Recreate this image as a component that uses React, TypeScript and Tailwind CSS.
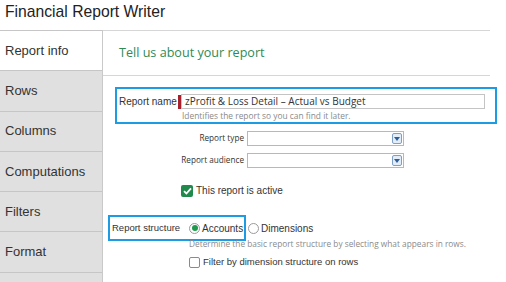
import React from "react";

const TABS = ["Report info", "Rows", "Columns", "Computations", "Filters", "Format", ""];

function SelectBox() {
  return (
    <div className="flex h-[15px] w-[157px] items-center justify-end border border-[#b8b8b8] bg-white pr-[1px]">
      <span className="flex h-[11px] w-[10px] items-center justify-center rounded-[2px] border border-[#7f9fc4] bg-[#e3edf8]">
        <svg width="6" height="4" viewBox="0 0 6 4">
          <path d="M0 0H6L3 4Z" fill="#2d5d9a" />
        </svg>
      </span>
    </div>
  );
}

function CheckedBox() {
  return (
    <span className="flex h-[12px] w-[12px] shrink-0 items-center justify-center rounded-[2px] bg-[#1f8a4c]">
      <svg width="9" height="8" viewBox="0 0 9 8">
        <path d="M1 4.2L3.4 6.5L8 1.3" stroke="white" strokeWidth="1.8" fill="none" />
      </svg>
    </span>
  );
}

function Radio({ checked }: { checked?: boolean }) {
  return (
    <span className="flex h-[11px] w-[11px] shrink-0 items-center justify-center rounded-full border border-[#9a9a9a] bg-white">
      {checked && <span className="h-[6px] w-[6px] rounded-full bg-[#1f9a4c]" />}
    </span>
  );
}

export default function App() {
  return (
    <div
      className="h-[282px] w-[506px] overflow-hidden whitespace-nowrap bg-white text-[#333]"
      style={{ fontFamily: '"Liberation Sans", Arial, sans-serif' }}
    >
      <div className="h-[30px] pl-[5px] pt-[1px] text-[15.7px] leading-[22px] text-[#222]">
        Financial Report Writer
      </div>
      <div className="flex">
        <div className="w-[103px] shrink-0 border-r border-[#c9c9c9]">
          {TABS.map((t, i) => (
            <div
              key={i}
              className={`flex h-[40.3px] items-center border-t border-[#c6c6c6] pl-[5px] text-[13px] ${
                i === 0 ? "bg-white" : "bg-[#e0e0e0]"
              }`}
            >
              {t}
            </div>
          ))}
        </div>
        <div className="flex-1">
          <div
            className="mr-[16px] flex h-[46px] items-center border-y border-[#d6d6d6] pl-[16px] text-[12.6px] text-[#2f8a55]"
            style={{ fontFamily: '"Open Sans", sans-serif' }}
          >
            Tell us about your report
          </div>

          <div className="ml-[12px] mt-[11px] h-[37px] w-[382px] border-2 border-[#1d9be3] pl-[2px]">
            <div className="mt-[5px] flex items-center">
              <span className="w-[59px] shrink-0 text-[10px] leading-[14px]">Report name</span>
              <span className="h-[14px] w-[3px] shrink-0 bg-[#a8202c]" />
              <div
                className="flex h-[15px] w-[304px] items-center border border-[#c4c4c4] pl-[3px] text-[10px] text-[#333]"
                style={{ fontFamily: '"Open Sans", sans-serif' }}
              >
                zProfit &amp; Loss Detail – Actual vs Budget
              </div>
            </div>
            <div
              className="ml-[63px] mt-[2px] text-[8.4px] leading-[10px] text-[#8a8a8a]"
              style={{ fontFamily: '"Open Sans", sans-serif' }}
            >
              Identifies the report so you can find it later.
            </div>
          </div>

          <div className="mt-[7px] flex flex-col gap-[7px]" style={{ fontFamily: '"Open Sans", sans-serif' }}>
            <div className="flex items-center">
              <span className="w-[144px] pr-[3px] text-right text-[8.2px]">Report type</span>
              <SelectBox />
            </div>
            <div className="flex items-center">
              <span className="w-[144px] pr-[3px] text-right text-[8.2px]">Report audience</span>
              <SelectBox />
            </div>
          </div>

          <div className="ml-[78px] mt-[15px] flex items-center gap-[3px] text-[10px]">
            <CheckedBox />
            <span>This report is active</span>
          </div>

          <div className="mt-[17px] flex items-center">
            <div className="ml-[5px] flex h-[26px] w-[138px] shrink-0 items-center border-2 border-[#1d9be3] pl-[2px] text-[9.5px]">
              <span className="w-[77px] shrink-0">Report structure</span>
              <Radio checked />
              <span className="ml-[2px] text-[10px]">Accounts</span>
            </div>
            <span className="ml-[2px]">
              <Radio />
            </span>
            <span className="ml-[2px] text-[10px]">Dimensions</span>
          </div>
          <div
            className="ml-[86px] mt-[-2px] text-[8.3px] leading-[10px] text-[#8a8a8a]"
            style={{ fontFamily: '"Open Sans", sans-serif' }}
          >
            Determine the basic report structure by selecting what appears in rows.
          </div>
          <div className="ml-[86px] mt-[6px] flex items-center gap-[3px] text-[9.5px]">
            <span className="h-[11px] w-[11px] shrink-0 rounded-[2px] border border-[#8a8a8a] bg-white" />
            <span>Filter by dimension structure on rows</span>
          </div>
        </div>
      </div>
    </div>
  );
}
